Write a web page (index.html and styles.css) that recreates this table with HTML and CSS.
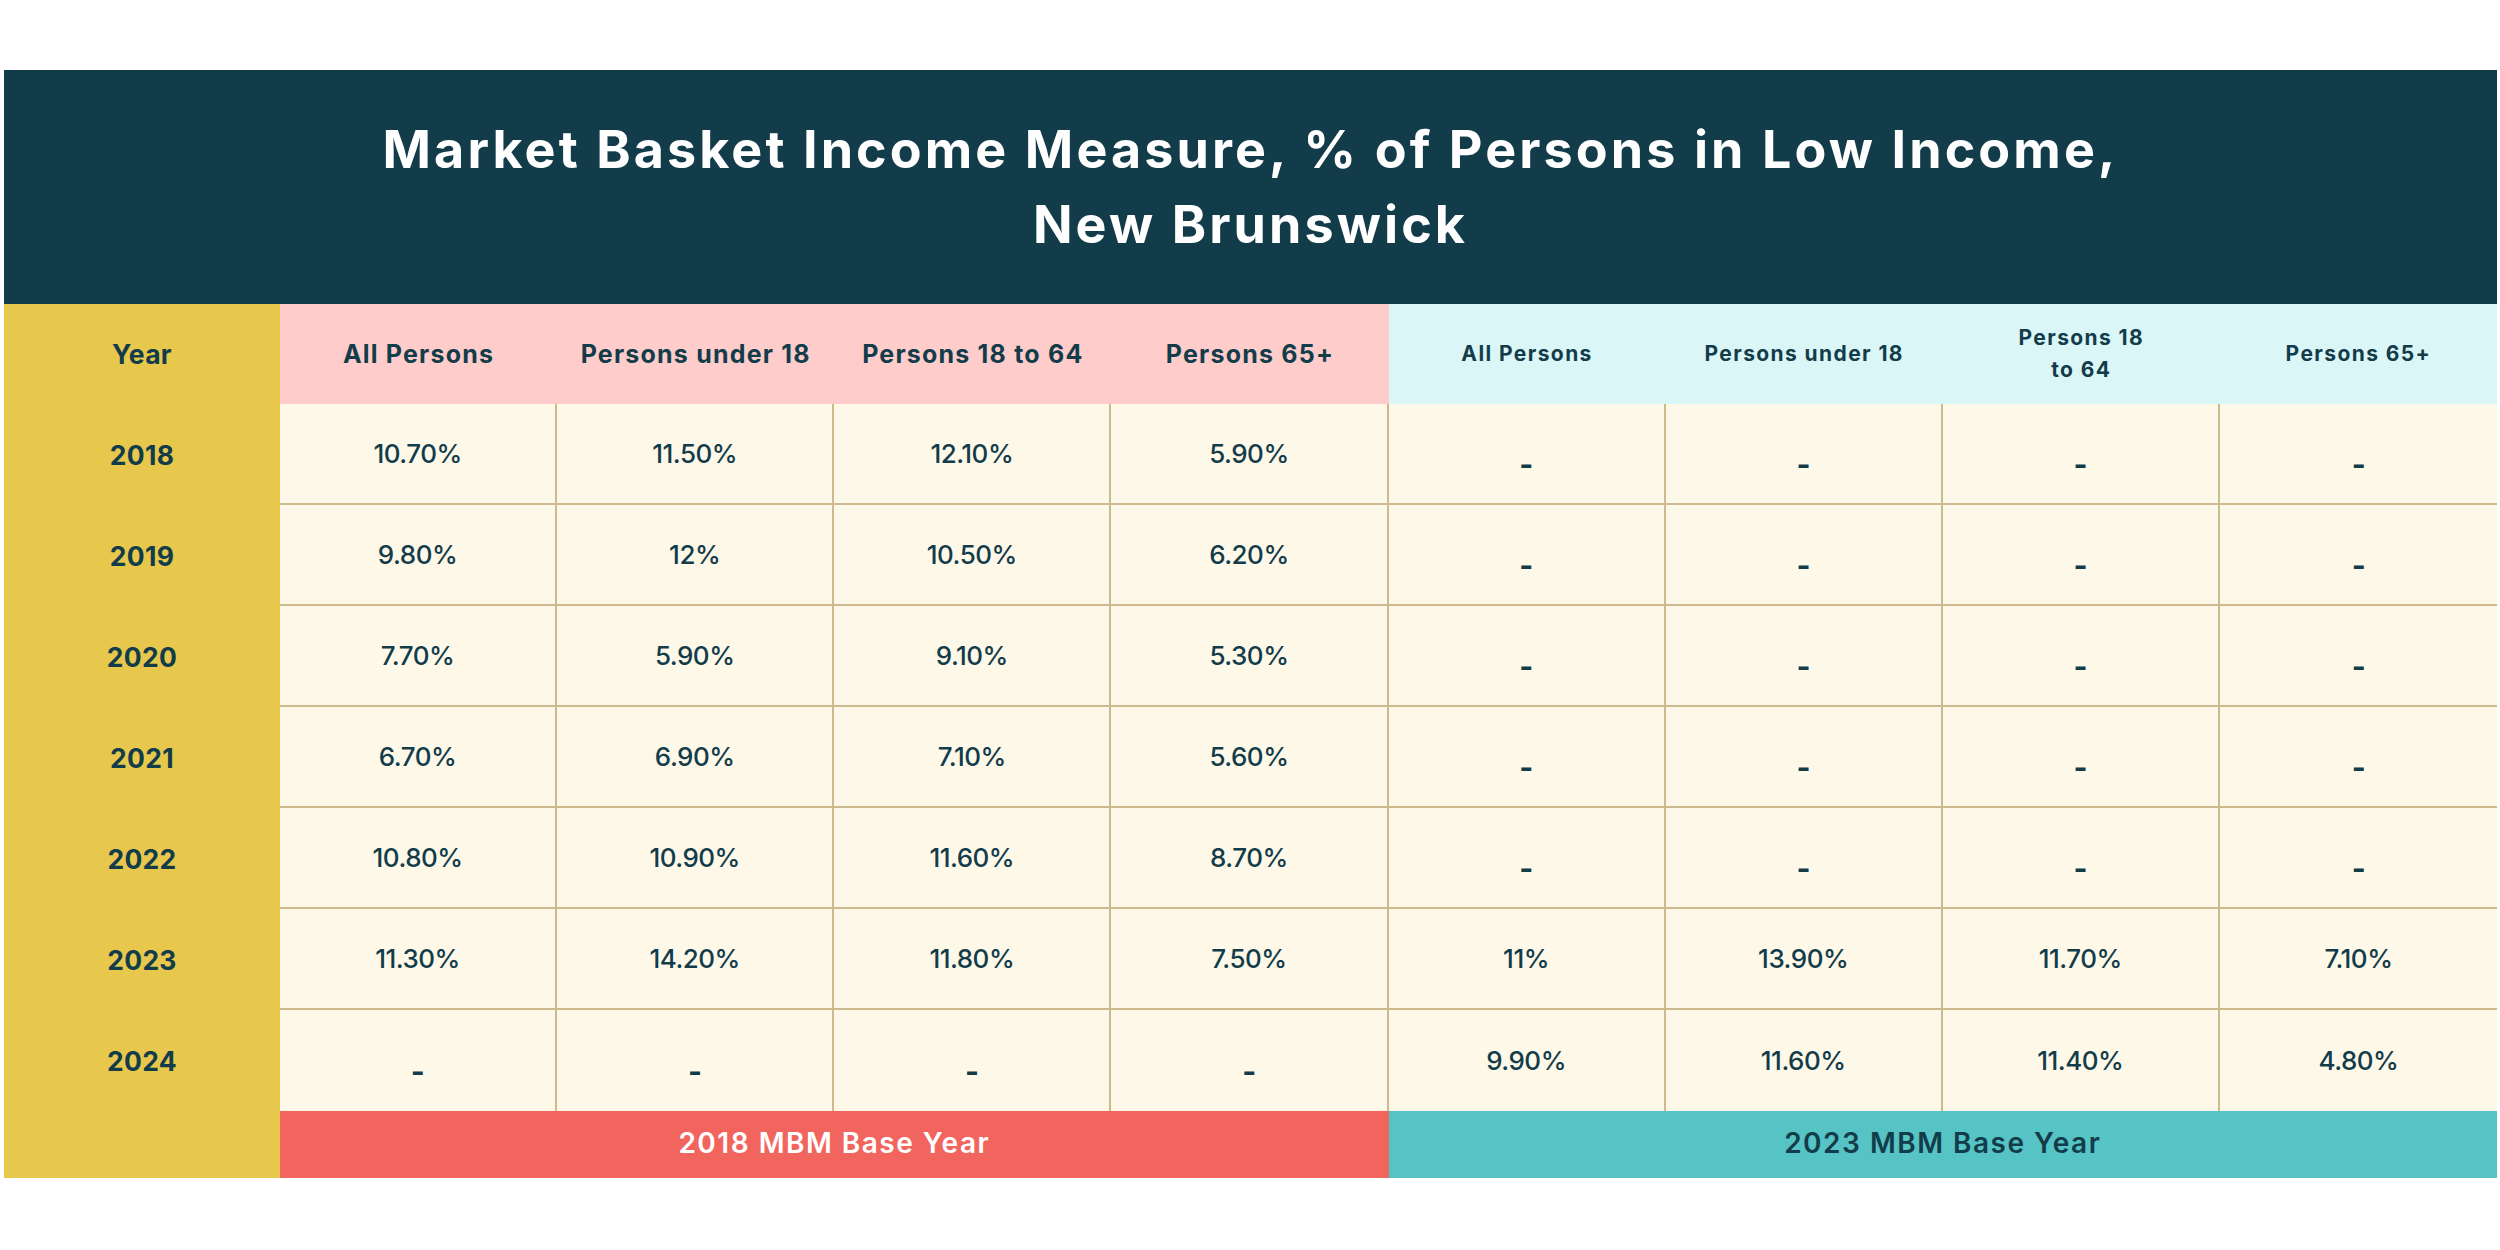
FILE: index.html
```html
<!DOCTYPE html>
<html lang="en">
<head>
<meta charset="utf-8">
<title>Market Basket Income Measure, New Brunswick</title>
<link rel="stylesheet" href="styles.css">
</head>
<body>
<div class="sheet">
  <div class="title">
    <h1>Market Basket Income Measure, % of Persons in Low Income,<br>New Brunswick</h1>
  </div>
  <div class="row head">
    <div class="year">Year</div>
    <div class="h pink">All Persons</div>
    <div class="h pink">Persons under 18</div>
    <div class="h pink">Persons 18 to 64</div>
    <div class="h pink">Persons 65+</div>
    <div class="h cyan">All Persons</div>
    <div class="h cyan">Persons under 18</div>
    <div class="h cyan">Persons 18<br>to 64</div>
    <div class="h cyan">Persons 65+</div>
  </div>
  <div class="row data">
    <div class="year">2018</div>
    <div class="v">10.70%</div><div class="v">11.50%</div><div class="v">12.10%</div><div class="v">5.90%</div>
    <div class="v"><span class="na">-</span></div><div class="v"><span class="na">-</span></div><div class="v"><span class="na">-</span></div><div class="v"><span class="na">-</span></div>
  </div>
  <div class="row data">
    <div class="year">2019</div>
    <div class="v">9.80%</div><div class="v">12%</div><div class="v">10.50%</div><div class="v">6.20%</div>
    <div class="v"><span class="na">-</span></div><div class="v"><span class="na">-</span></div><div class="v"><span class="na">-</span></div><div class="v"><span class="na">-</span></div>
  </div>
  <div class="row data">
    <div class="year">2020</div>
    <div class="v">7.70%</div><div class="v">5.90%</div><div class="v">9.10%</div><div class="v">5.30%</div>
    <div class="v"><span class="na">-</span></div><div class="v"><span class="na">-</span></div><div class="v"><span class="na">-</span></div><div class="v"><span class="na">-</span></div>
  </div>
  <div class="row data">
    <div class="year">2021</div>
    <div class="v">6.70%</div><div class="v">6.90%</div><div class="v">7.10%</div><div class="v">5.60%</div>
    <div class="v"><span class="na">-</span></div><div class="v"><span class="na">-</span></div><div class="v"><span class="na">-</span></div><div class="v"><span class="na">-</span></div>
  </div>
  <div class="row data">
    <div class="year">2022</div>
    <div class="v">10.80%</div><div class="v">10.90%</div><div class="v">11.60%</div><div class="v">8.70%</div>
    <div class="v"><span class="na">-</span></div><div class="v"><span class="na">-</span></div><div class="v"><span class="na">-</span></div><div class="v"><span class="na">-</span></div>
  </div>
  <div class="row data">
    <div class="year">2023</div>
    <div class="v">11.30%</div><div class="v">14.20%</div><div class="v">11.80%</div><div class="v">7.50%</div>
    <div class="v">11%</div><div class="v">13.90%</div><div class="v">11.70%</div><div class="v">7.10%</div>
  </div>
  <div class="row data last">
    <div class="year">2024</div>
    <div class="v"><span class="na">-</span></div><div class="v"><span class="na">-</span></div><div class="v"><span class="na">-</span></div><div class="v"><span class="na">-</span></div>
    <div class="v">9.90%</div><div class="v">11.60%</div><div class="v">11.40%</div><div class="v">4.80%</div>
  </div>
  <div class="row foot">
    <div class="year"></div>
    <div class="base base-2018">2018 MBM Base Year</div>
    <div class="base base-2023">2023 MBM Base Year</div>
  </div>
</div>
</body>
</html>
```

FILE: styles.css
```css
* { box-sizing: border-box; }

html, body {
  margin: 0;
  padding: 0;
  background: #ffffff;
}

body {
  width: 2500px;
  height: 1250px;
  padding-top: 70px;
  padding-left: 4px;
  font-family: "Inter", "Liberation Sans", sans-serif;
  color: #133c4a;
  overflow: hidden;
}

.sheet {
  width: 2493px;
}

.title {
  height: 234px;
  background: #133c4a;
  display: flex;
  align-items: center;
  justify-content: center;
}

.title h1 {
  margin: 0;
  color: #ffffff;
  font-size: 52px;
  font-weight: 700;
  letter-spacing: 3.1px;
  line-height: 75px;
  text-align: center;
}

.row {
  display: grid;
  grid-template-columns: 276px repeat(8, 1fr);
}

.year {
  background: #e7c84d;
  display: flex;
  align-items: center;
  justify-content: center;
  font-size: 26.5px;
  font-weight: 700;
  letter-spacing: 0.3px;
}

.head { height: 100px; }

.h {
  display: flex;
  align-items: center;
  justify-content: center;
  text-align: center;
  font-weight: 700;
}

.pink {
  background: #fecccb;
  font-size: 25px;
  letter-spacing: 1.2px;
}

.cyan {
  background: #dbf6f6;
  font-size: 21px;
  letter-spacing: 1.4px;
  line-height: 32px;
}

.data { height: 101px; }

.v {
  background: #fef8e9;
  display: flex;
  align-items: center;
  justify-content: center;
  font-size: 26px;
  font-weight: 500;
  letter-spacing: -0.5px;
  border-right: 2px solid #cdbb8e;
  border-bottom: 2px solid #cdbb8e;
}

.v:last-child { border-right: none; }

.last .v { border-bottom: none; }

.na {
  font-size: 30px;
  font-weight: 700;
  padding-top: 20px;
}

.foot { height: 67px; }

.base {
  grid-column: span 4;
  display: flex;
  align-items: center;
  justify-content: center;
  padding-bottom: 4px;
  font-size: 28px;
  font-weight: 600;
  letter-spacing: 1.5px;
}

.base-2018 {
  background: #f2655e;
  color: #ffffff;
}

.base-2023 {
  background: #56c4c5;
  color: #133c4a;
}
```
